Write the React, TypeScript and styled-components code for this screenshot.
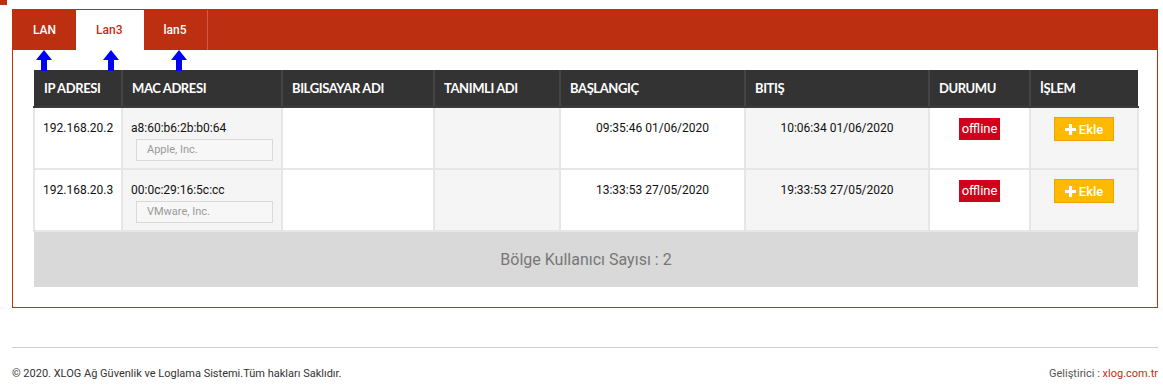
import React from "react";
import styled, { createGlobalStyle } from "styled-components";

const GlobalStyle = createGlobalStyle`
  html, body { margin: 0; padding: 0; background: #fff; }
  body { font-family: Roboto, "Liberation Sans", Arial, sans-serif; color: #333; }
  * { box-sizing: border-box; }
`;

const RED = "#bd2f11";

const Page = styled.div`
  position: relative;
  padding: 9px 5px 0 12px;
`;

const CornerMark = styled.span`
  position: absolute;
  left: 0;
  top: 0;
  width: 7px;
  height: 5px;
  background: ${RED};
`;

const Panel = styled.section`
  position: relative;
  border: 1px solid ${RED};
`;

const TabBar = styled.div`
  display: flex;
  height: 40px;
  background: ${RED};
`;

const Tab = styled.div<{ $active?: boolean }>`
  display: flex;
  align-items: center;
  justify-content: center;
  height: 40px;
  padding: 0 20px;
  font-family: Roboto, "Liberation Sans", sans-serif;
  font-size: 12px;
  font-weight: 500;
  color: ${(p) => (p.$active ? RED : "#fff")};
  background: ${(p) => (p.$active ? "#fff" : "transparent")};
  border-right: 1px solid ${(p) => (p.$active ? "#fff" : "rgba(255,255,255,0.22)")};
  &:first-child { border-right: none; }
`;

const Arrow = styled.svg<{ $left: number }>`
  position: absolute;
  top: 40px;
  left: ${(p) => p.$left}px;
  width: 16px;
  height: 21px;
`;

const Body = styled.div`
  padding: 20px;
`;

const Table = styled.table`
  width: 100%;
  border-collapse: collapse;
  table-layout: fixed;
`;

const Th = styled.th<{ $w: number }>`
  width: ${(p) => p.$w}px;
  height: 37px;
  background: #333;
  color: #fff;
  text-align: left;
  padding: 0 9px;
  font-family: Lato, "Liberation Sans", sans-serif;
  font-weight: 700;
  font-size: 13px;
  letter-spacing: -0.4px;
  border-left: 2px solid #444;
  border-bottom: 2px solid #3c3c3c;
  white-space: nowrap;
  &:first-child { border-left: none; padding-left: 10px; }
`;

const Td = styled.td<{ $center?: boolean }>`
  height: 60px;
  vertical-align: top;
  padding: 10px 8px 7px;
  font-size: 12px;
  line-height: 20px;
  color: #111;
  text-align: ${(p) => (p.$center ? "center" : "left")};
  border: 2px solid #e6e6e6;
  background: #fff;
  &:nth-child(even) { background: #f5f5f5; }
`;

const Vendor = styled.div`
  margin: 1px 0 0 5px;
  height: 22px;
  width: 137px;
  border: 1px solid #d9d9d9;
  padding: 0 10px;
  font-size: 11px;
  line-height: 20px;
  color: #999;
  background: #f7f7f7;
`;

const Badge = styled.span`
  display: inline-block;
  height: 22px;
  padding: 0 3px;
  background: #d0021b;
  color: #fff;
  font-size: 13px;
  line-height: 22px;
`;

const AddButton = styled.button`
  display: inline-flex;
  align-items: center;
  justify-content: center;
  gap: 3px;
  width: 60px;
  height: 24px;
  margin-top: -1px;
  border: 1px solid #e8a700;
  background: #ffb900;
  color: #fff;
  font-family: Roboto, "Liberation Sans", sans-serif;
  font-size: 13px;
  font-weight: 500;
  cursor: pointer;
  padding: 0;
  svg { width: 11px; height: 11px; }
`;

const SummaryCell = styled.td`
  height: 56px;
  background: #d9d9d9;
  text-align: center;
  font-size: 16px;
  color: #777;
  border-top: 2px solid #e6e6e6;
`;

const FooterLine = styled.hr`
  margin: 39px 0 0;
  border: none;
  border-top: 1px solid #d0d0d0;
`;

const Footer = styled.footer`
  display: flex;
  justify-content: space-between;
  align-items: center;
  height: 50px;
  font-size: 11px;
  color: #333;
`;

const Dev = styled.span`
  color: #555;
  a { color: ${RED}; text-decoration: none; }
`;

const PlusIcon = () => (
  <svg viewBox="0 0 12 12" aria-hidden>
    <path d="M4.3 0h3.4v4.3H12v3.4H7.7V12H4.3V7.7H0V4.3h4.3z" fill="#fff" />
  </svg>
);

const UpArrow = ({ left }: { left: number }) => (
  <Arrow $left={left} viewBox="0 0 16 21" aria-hidden>
    <path d="M8 0L16 10H11V21H5V10H0Z" fill="#0000ff" />
  </Arrow>
);

const columns = [
  { label: "IP ADRESI", w: 88 },
  { label: "MAC ADRESI", w: 160 },
  { label: "BILGISAYAR ADI", w: 152 },
  { label: "TANIMLI ADI", w: 126 },
  { label: "BAŞLANGIÇ", w: 185 },
  { label: "BITIŞ", w: 184 },
  { label: "DURUMU", w: 101 },
  { label: "İŞLEM", w: 108 },
];

const rows = [
  { ip: "192.168.20.2", mac: "a8:60:b6:2b:b0:64", vendor: "Apple, Inc.", start: "09:35:46 01/06/2020", end: "10:06:34 01/06/2020" },
  { ip: "192.168.20.3", mac: "00:0c:29:16:5c:cc", vendor: "VMware, Inc.", start: "13:33:53 27/05/2020", end: "19:33:53 27/05/2020" },
];

export default function App() {
  return (
    <>
      <GlobalStyle />
      <Page>
        <CornerMark />
        <Panel>
          <TabBar>
            <Tab>LAN</Tab>
            <Tab $active>Lan3</Tab>
            <Tab>lan5</Tab>
          </TabBar>
          <UpArrow left={23} />
          <UpArrow left={90} />
          <UpArrow left={158} />
          <Body>
            <Table>
              <thead>
                <tr>
                  {columns.map((c) => (
                    <Th key={c.label} $w={c.w}>{c.label}</Th>
                  ))}
                </tr>
              </thead>
              <tbody>
                {rows.map((r) => (
                  <tr key={r.ip}>
                    <Td>{r.ip}</Td>
                    <Td>
                      {r.mac}
                      <Vendor>{r.vendor}</Vendor>
                    </Td>
                    <Td />
                    <Td />
                    <Td $center>{r.start}</Td>
                    <Td $center>{r.end}</Td>
                    <Td $center><Badge>offline</Badge></Td>
                    <Td $center>
                      <AddButton><PlusIcon />Ekle</AddButton>
                    </Td>
                  </tr>
                ))}
                <tr>
                  <SummaryCell colSpan={8}>Bölge Kullanıcı Sayısı : 2</SummaryCell>
                </tr>
              </tbody>
            </Table>
          </Body>
        </Panel>
        <FooterLine />
        <Footer>
          <span>© 2020. XLOG Ağ Güvenlik ve Loglama Sistemi.Tüm hakları Saklıdır.</span>
          <Dev>Geliştirici : <a href="#">xlog.com.tr</a></Dev>
        </Footer>
      </Page>
    </>
  );
}
